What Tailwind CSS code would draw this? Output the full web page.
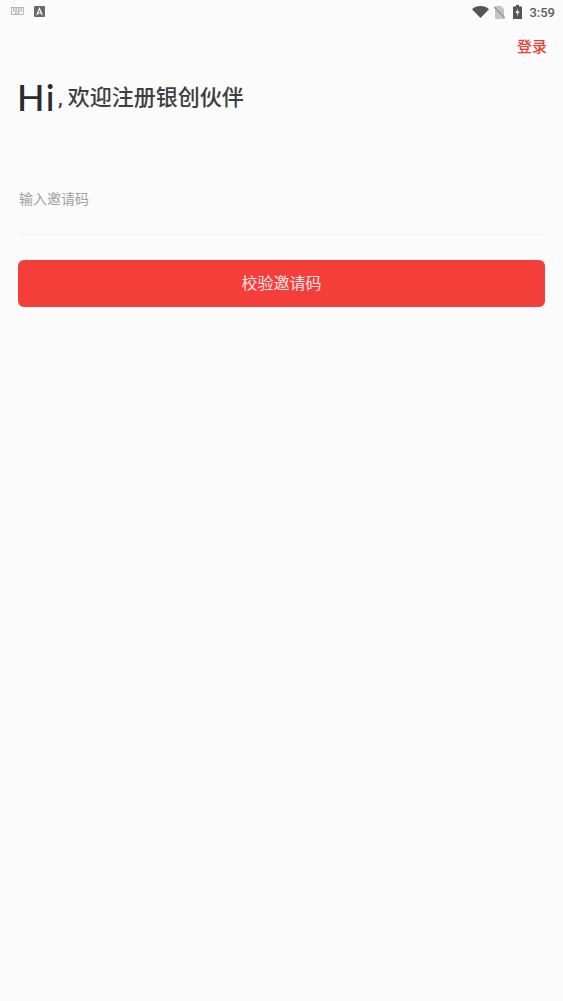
<!DOCTYPE html>
<html lang="zh-CN">
<head>
<meta charset="utf-8">
<script src="https://cdn.jsdelivr.net/npm/@tailwindcss/browser@4"></script>
</head>
<body class="bg-[#fbfbfb] font-['Roboto','Noto_Sans_CJK_SC',sans-serif]">
<div class="w-[563px] h-[1001px] overflow-hidden flex flex-col">
  <div class="h-[24px] flex items-center pl-[11px] pr-[8px]">
    <svg width="13" height="8" viewBox="0 0 13 8" class="mt-[-2px]"><rect x="0.5" y="0.5" width="12" height="7" fill="none" stroke="#8a8a8a" stroke-width="0.6"/><path d="M2 2h9M2 4h9M4 6h5" stroke="#777" stroke-width="1" stroke-dasharray="1 .6"/></svg>
    <svg width="11" height="11" viewBox="0 0 11 11" class="ml-[10px] mt-[-1px]"><rect width="11" height="11" rx="1" fill="#6a6a6a"/><path d="M2.8 9 5.5 2.5 8.2 9M3.8 7h3.4" fill="none" stroke="#fff" stroke-width="1.1"/></svg>
    <div class="flex-1"></div>
    <svg width="17" height="12" viewBox="0 0 17 12"><path d="M0 3.2C2.2 1.2 5.2 0 8.5 0s6.300 1.200 8.500 3.200L8.500 12z" fill="#555"/></svg>
    <svg width="11" height="13" viewBox="0 0 11 13" class="ml-[5px]"><path d="M1 0h6l3 3v10H1z" fill="#c4c4c4"/><path d="M0 1l11 11" stroke="#8d8d8d" stroke-width="1.200"/></svg>
    <svg width="9" height="14" viewBox="0 0 9 14" class="ml-[8px]"><path d="M3 0h3v1.500h3V14H0V1.500h3z" fill="#555"/><path d="M5 3 2.500 8h2l-.5 3.500L6.500 6.500h-2z" fill="#fbfbfb"/></svg>
    <span class="ml-[7px] text-[13px] leading-none text-[#5f5f5f] font-medium">3:59</span>
  </div>

  <div class="h-[46px] flex justify-end items-center pr-[16px]">
    <span class="text-[15px] leading-none font-medium text-[#ee3b38]">登录</span>
  </div>

  <div class="h-[32px] mt-[11px] ml-[17px] flex items-end">
    <span class="text-[36px] leading-[32px] font-medium tracking-[1.500px] text-[#2b2b2b] font-['Lato','Roboto',sans-serif]">Hi</span>
    <span class="ml-[2px] text-[21px] leading-[30px] font-medium text-[#3b3b3b]">,</span>
    <span class="ml-[5px] text-[22px] leading-[30px] font-medium text-[#3f3f3f]">欢迎注册银创伙伴</span>
  </div>

  <div class="mx-[18px] mt-[62px] h-[60px] border-b border-[#f3f3f3] pt-[13px]">
    <span class="block ml-[1px] text-[14px] leading-[22px] text-[#a0a0a0]">输入邀请码</span>
  </div>

  <button class="mx-[18px] mt-[25px] h-[47px] rounded-[6px] bg-[#f43e3a] text-[16px] text-[#fbe4e2] flex items-center justify-center">校验邀请码</button>
</div>
</body>
</html>
